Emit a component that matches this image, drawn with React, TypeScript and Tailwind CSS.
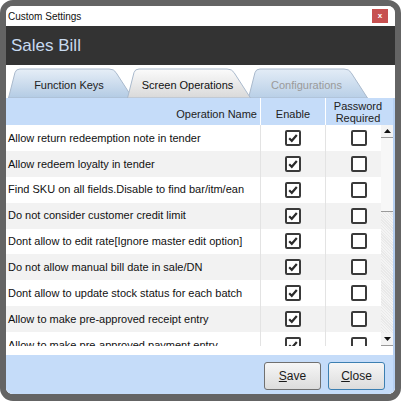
import React from "react";

const rows = [
  "Allow return redeemption note in tender",
  "Allow redeem loyalty in tender",
  "Find SKU on all fields.Disable to find bar/itm/ean",
  "Do not consider customer credit limit",
  "Dont allow to edit rate[Ignore master edit option]",
  "Do not allow manual bill date in sale/DN",
  "Dont allow to update stock status for each batch",
  "Allow to make pre-approved receipt entry",
  "Allow to make pre-approved payment entry",
];

type TabProps = {
  label: string;
  width: number;
  id: string;
  top: string;
  bottom: string;
  text: string;
  z: string;
  ml: string;
};

const Tab = ({ label, width, id, top, bottom, text, z, ml }: TabProps) => {
  const w = width;
  const d = `M0.5,30 L7,4.5 Q8,1 12,1 L${w - 24},1 Q${w - 19},1 ${w - 17},4.5 L${w - 0.5},30 Z`;
  return (
    <div className={`relative h-[30px] shrink-0 ${z} ${ml}`} style={{ width: w }}>
      <svg className="absolute inset-0" width={w} height={30} viewBox={`0 0 ${w} 30`}>
        <defs>
          <linearGradient id={id} x1="0" y1="0" x2="0" y2="1">
            <stop offset="0" stopColor={top} />
            <stop offset="1" stopColor={bottom} />
          </linearGradient>
        </defs>
        <path d={d} fill={`url(#${id})`} stroke="#a9b9cc" strokeWidth="1" />
      </svg>
      <div className={`relative flex h-full items-center justify-center pt-[5px] pr-[3px] text-[11px] ${text}`}>
        {label}
      </div>
    </div>
  );
};

const Check = ({ checked }: { checked: boolean }) => (
  <div className="flex h-[16px] w-[16px] items-center justify-center rounded-[2px] border-2 border-[#3a3a3a] bg-white">
    {checked && (
      <svg width="12" height="12" viewBox="0 0 12 12">
        <path d="M2.2,6.2 L4.8,8.8 L9.8,3" fill="none" stroke="#2b2b2b" strokeWidth="2.2" />
      </svg>
    )}
  </div>
);

const Button = ({ first, rest, primary }: { first: string; rest: string; primary?: boolean }) => (
  <button
    className={`h-[28px] w-[57px] rounded-[3px] border bg-gradient-to-b from-[#f6f6f6] to-[#dcdcdc] text-[12px] text-[#1a1a1a] ${
      primary ? "border-[#3c7fb1]" : "border-[#707070]"
    }`}
  >
    <span className="underline">{first}</span>
    {rest}
  </button>
);

export default function App() {
  return (
    <div className="h-[401px] w-[401px] bg-white font-['Liberation_Sans',Arial,sans-serif]">
      <div className="flex h-full flex-col overflow-hidden rounded-[13px] border-[6px] border-b-[7px] border-[#646464]">
        {/* title bar */}
        <div className="flex h-[20px] shrink-0 items-center justify-between bg-white pl-[2px] pr-[7px]">
          <span className="text-[10px] text-[#111]">Custom Settings</span>
          <div className="flex h-[14px] w-[16px] items-center justify-center bg-[#c75050] text-[8px] font-bold leading-none text-white">
            x
          </div>
        </div>

        {/* header */}
        <div className="flex h-[39px] shrink-0 items-center bg-[#333333] pl-[5px] pt-[1px]">
          <span className="text-[17px] text-[#c8daf0]">Sales Bill</span>
        </div>

        {/* tabs */}
        <div className="flex h-[33px] shrink-0 items-end bg-white pl-[2px]">
          <Tab label="Function Keys" width={125} id="t1" top="#e6eef7" bottom="#b3cbe4" text="text-[#222]" z="z-10" ml="" />
          <Tab label="Screen Operations" width={124} id="t2" top="#fbfbfb" bottom="#d9d9d9" text="text-[#111]" z="z-30" ml="-ml-[6px]" />
          <Tab label="Configurations" width={120} id="t3" top="#e3ecf6" bottom="#b8cfe7" text="text-[#9a9a9a]" z="z-20" ml="-ml-[3px]" />
        </div>

        {/* table */}
        <div className="flex flex-1 flex-col border-r-2 border-[#b6cff0] bg-white">
          <div className="grid h-[27px] shrink-0 grid-cols-[255px_65px_1fr] bg-[#c5dcf9] text-[11px] text-[#222]">
            <div className="flex items-end justify-end border-r border-white pb-[3px] pr-[3px]">Operation Name</div>
            <div className="flex items-end justify-center border-r border-white pb-[3px]">Enable</div>
            <div className="flex flex-col items-center justify-center pr-[3px] leading-[12px]">
              <span>Password</span>
              <span>Required</span>
            </div>
          </div>

          <div className="relative h-[221px] shrink-0 overflow-hidden">
            {rows.map((r, i) => (
              <div
                key={r}
                className={`grid h-[25.875px] grid-cols-[255px_65px_1fr] text-[11px] text-[#111] ${
                  i % 2 === 1 ? "bg-[#f2f2f2]" : "bg-white"
                }`}
              >
                <div className="flex items-center whitespace-nowrap border-r border-[#e3e3e3] pl-[2px]">{r}</div>
                <div className="flex items-center justify-center border-r border-[#e3e3e3]">
                  <Check checked />
                </div>
                <div className="flex items-center justify-center pr-[2px]">
                  <Check checked={false} />
                </div>
              </div>
            ))}

            {/* scrollbar */}
            <div className="absolute bottom-0 right-0 top-0 flex w-[12px] flex-col bg-[#efefef] bg-[repeating-linear-gradient(45deg,#f4f4f4_0px,#f4f4f4_1px,#e9e9e9_1px,#e9e9e9_2px)]">
              <div className="flex h-[13px] items-center justify-center border-b border-[#9a9a9a] bg-[#f4f4f4]">
                <svg width="7" height="4" viewBox="0 0 7 4">
                  <path d="M0,4 L3.5,0 L7,4 Z" fill="#111" />
                </svg>
              </div>
              <div className="h-[74px] border-b border-[#9a9a9a] bg-[#f7f7f7]" />
              <div className="flex-1" />
              <div className="flex h-[13px] items-center justify-center border-b border-[#9a9a9a] bg-[#f4f4f4]">
                <svg width="7" height="4" viewBox="0 0 7 4">
                  <path d="M0,0 L7,0 L3.5,4 Z" fill="#111" />
                </svg>
              </div>
            </div>
          </div>

          <div className="h-[9px] shrink-0 bg-white" />

          {/* footer */}
          <div className="flex flex-1 items-start justify-end gap-[7px] bg-[#c5dcf9] pr-[8px] pt-[7px]">
            <Button first="S" rest="ave" />
            <Button first="C" rest="lose" primary />
          </div>
        </div>
      </div>
    </div>
  );
}
